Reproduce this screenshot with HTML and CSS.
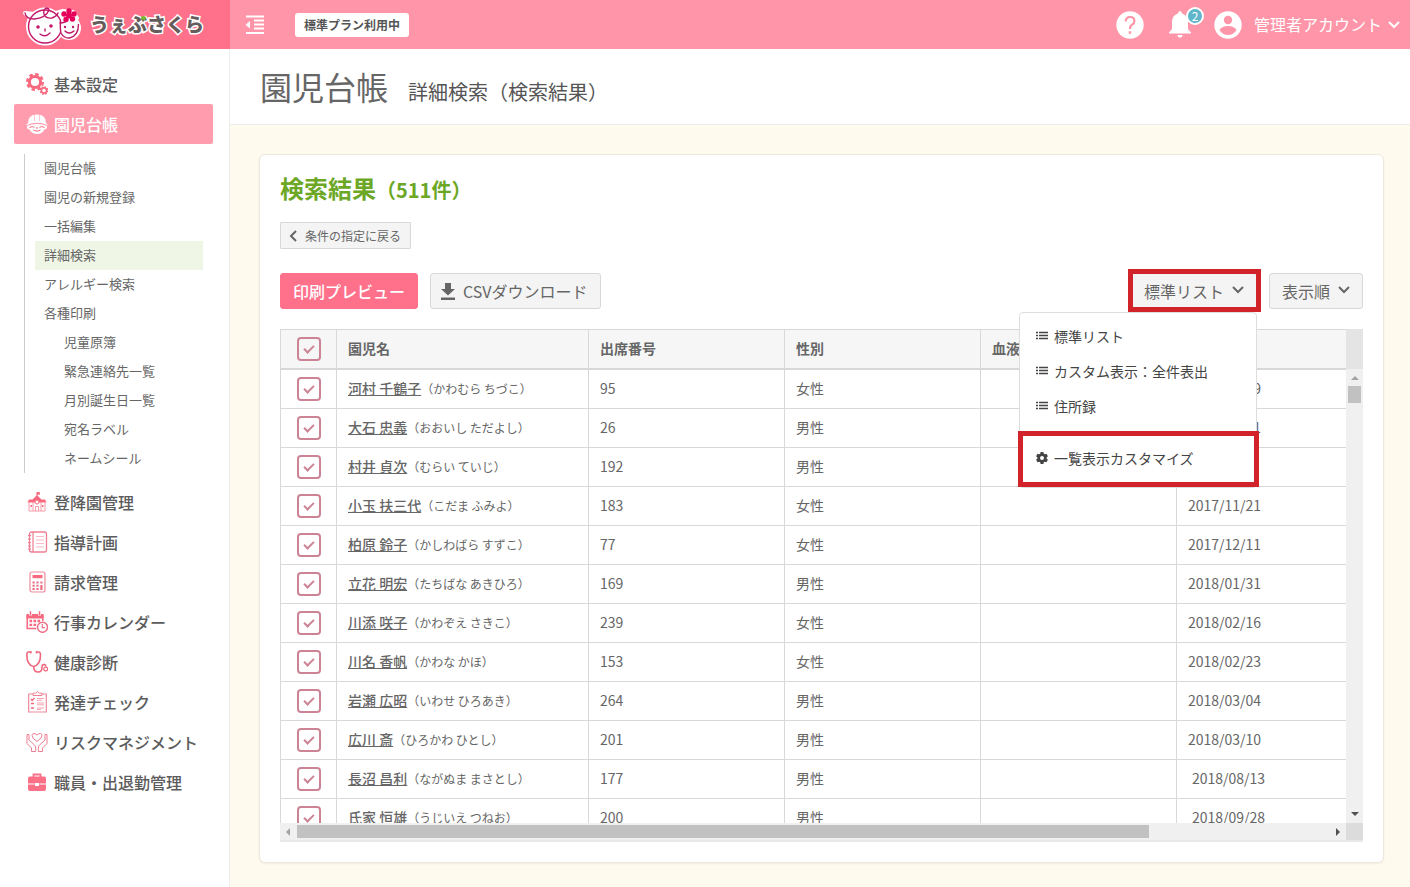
FILE: index.html
```html
<!DOCTYPE html>
<html lang="ja">
<head>
<meta charset="utf-8">
<meta name="viewport" content="width=device-width, initial-scale=1">
<title>園児台帳 詳細検索（検索結果）</title>
<link rel="stylesheet" href="styles.css">
</head>
<body>
<svg class="defs" aria-hidden="true">
  <symbol id="chev-down" viewBox="0 0 12 8"><path d="M1 1l5 5 5-5" fill="none" stroke="currentColor" stroke-width="2"/></symbol>
  <symbol id="list" viewBox="0 0 12 9"><path d="M0 1.500h2M0 4.500h2M0 7.500h2M3 1.500h9M3 4.500h9M3 7.500h9" stroke="currentColor" stroke-width="1.300"/></symbol>
</svg>
<div class="app">
  <header class="topbar">
    <a class="brand" href="#">
      <svg class="brand-mark" viewBox="0 0 60 44" aria-hidden="true">
        <g fill="#fff" stroke="#fff" stroke-width="4" stroke-linejoin="round">
          <circle cx="22" cy="23.500" r="17"/><circle cx="46" cy="25" r="10"/><path d="M2 10q8 8 20 3L40 8 50 9 54 15z"/>
        </g>
        <circle cx="22" cy="23.500" r="16.500" fill="#fff" stroke="#c2186a" stroke-width="1.400"/>
        <path d="M37.500 18q-.5 8 .5 12 3 5.500 8.500 5 9-2 9-14" fill="#fff" stroke="#c2186a" stroke-width="1.400"/>
        <path d="M2 10q1 6 9 6 12-1 15-9 0-2-3-2-3 2-2 6 2 5 8 4 5-2 6-5M37 20q5 0 7-3" fill="none" stroke="#c2186a" stroke-width="1.400" stroke-linecap="round"/>
        <path d="M17 31q5 4 10-1M42 28q4 4 9 0M22 26v2" fill="none" stroke="#c2186a" stroke-width="1.400" stroke-linecap="round"/>
        <g fill="#c2186a"><circle cx="15" cy="24" r="1.800"/><circle cx="28" cy="23" r="1.800"/><circle cx="42" cy="24" r="1.200"/><circle cx="50" cy="24" r="1.200"/></g>
        <g fill="#e4005a"><circle cx="46" cy="8" r="2.700"/><circle cx="51" cy="11" r="2.700"/><circle cx="49.500" cy="16" r="2.700"/><circle cx="43" cy="16.500" r="2.700"/><circle cx="41" cy="11" r="2.700"/><circle cx="46" cy="12.500" r="3"/></g>
      </svg>
      <span class="brand-name">うぇ<span class="leaf">ぶ</span>さくら</span>
    </a>
    <div class="bar">
      <button class="icon-btn" type="button" aria-label="メニュー開閉">
        <svg width="20" height="20" viewBox="0 0 20 20"><path d="M1 1.500h18M9 5.500h10M9 9.500h10M9 13.500h10M1 18h18" stroke="#fff" stroke-width="1.800"/><path d="M5 6v7.500L.5 9.700z" fill="#fff"/></svg>
      </button>
      <span class="plan">標準プラン利用中</span>
      <div class="tools">
        <button class="icon-btn" type="button" aria-label="ヘルプ">
          <svg width="28" height="28" viewBox="0 0 28 28"><circle cx="14" cy="14" r="13.700" fill="#fff"/><path d="M9.800 10.500q0-4.500 4.300-4.500t4.300 4q0 2.200-2.300 3.700t-2.100 4.300" fill="none" stroke="#ff95a8" stroke-width="2.200"/><path d="M12.700 20.300h2.500v2.500h-2.500z" fill="#ff95a8"/></svg>
        </button>
        <button class="icon-btn bell" type="button" aria-label="お知らせ">
          <svg width="22" height="27" viewBox="0 0 22 27"><path d="M11 0q2 0 2 2.500 6 1.800 6 8.500v7l3 3.500v1H0v-1L3 18v-7q0-6.700 6-8.500Q9 0 11 0zM8.300 24h5.400q-.4 2.700-2.700 2.700T8.300 24z" fill="#fff"/></svg>
          <span class="badge">2</span>
        </button>
        <button class="account" type="button">
          <svg width="28" height="28" viewBox="0 0 28 28"><circle cx="14" cy="14" r="13.700" fill="#fff"/><circle cx="14" cy="9" r="4.200" fill="#ff95a8"/><path d="M5.500 19q2.500-4 8.500-4t8.500 4q-3 5-8.500 5t-8.500-5z" fill="#ff95a8"/></svg>
          <span>管理者アカウント</span>
          <svg class="chev" width="12" height="8"><use href="#chev-down"/></svg>
        </button>
      </div>
    </div>
  </header>

  <nav class="sidebar">
    <ul class="menu">
      <li><a class="item" href="#"><svg viewBox="0 0 22 22"><circle cx="9" cy="9" r="5.600" fill="none" stroke="#f8697f" stroke-width="3"/><circle cx="9" cy="9" r="7.800" fill="none" stroke="#f8697f" stroke-width="2.400" stroke-dasharray="3.500 2.620"/><circle cx="18" cy="17.500" r="2.600" fill="none" stroke="#f8697f" stroke-width="1.600"/><circle cx="18" cy="17.500" r="3.800" fill="none" stroke="#f8697f" stroke-width="1.200" stroke-dasharray="1.700 1.280"/></svg>基本設定</a></li>
      <li><a class="item active" href="#"><svg viewBox="0 0 22 22"><path d="M2 10q0-8.500 9-8.500T20 10q2 1 1.500 2.500-4-2.800-10.500-2.800T.5 12.500Q0 11 2 10z" fill="#fff"/><path d="M8.500 2v6M13.500 2v6" stroke="#ff9cad" stroke-width=".6"/><path d="M1 13q-.5 3 2.500 3.500Q6 21 11 21t7.500-4.500Q21.500 16 21 13q-4-2-10-2T1 13z" fill="#fff"/><path d="M3.500 14.500q3-2 5 0M13.500 14.500q2-2 5 0M7.500 17q3.500 2.500 7 0M10 15h2" fill="none" stroke="#f8697f"/></svg>園児台帳</a>
        <ul class="submenu">
          <li><a href="#">園児台帳</a></li>
          <li><a href="#">園児の新規登録</a></li>
          <li><a href="#">一括編集</a></li>
          <li><a class="current" href="#">詳細検索</a></li>
          <li><a href="#">アレルギー検索</a></li>
          <li><a href="#">各種印刷</a>
            <ul class="nested">
              <li><a href="#">児童原簿</a></li>
              <li><a href="#">緊急連絡先一覧</a></li>
              <li><a href="#">月別誕生日一覧</a></li>
              <li><a href="#">宛名ラベル</a></li>
              <li><a href="#">ネームシール</a></li>
            </ul>
          </li>
        </ul>
      </li>
      <li><a class="item" href="#"><svg viewBox="0 0 22 22"><path d="M11 1v5M11 1.500h2.500v1.800H11z" stroke="#f8697f" fill="#f8697f" stroke-width=".8"/><path d="M11 4l4.500 4.500H19l1.500 3H1.500L3 8.500h3.500z" fill="#f8697f"/><path d="M3 11.500V20h16v-8.500M7 11v9M15 11v9M9.500 20v-4.500h3V20" fill="none" stroke="#f99aa8"/><circle cx="11" cy="11" r="2" fill="#fff" stroke="#f8697f"/><path d="M4.500 14h1.500v2H4.500zM16 14h1.500v2H16z" fill="#f8697f"/></svg>登降園管理</a></li>
      <li><a class="item" href="#"><svg viewBox="0 0 22 22"><rect x="3.500" y="1" width="17" height="20" rx="2" fill="none" stroke="#ee7f92" stroke-width="1.300"/><path d="M7 1v20M2 4.500h3M2 8h3M2 11.500h3M2 15h3M2 18h3" stroke="#ee7f92" stroke-width="1.200"/><path d="M10 5.500h8M10 9h8M10 12.500h8M10 16h8" stroke="#f9a9b5" stroke-width=".8"/></svg>指導計画</a></li>
      <li><a class="item" href="#"><svg viewBox="0 0 22 22"><rect x="4" y="1" width="15" height="20" rx="2" fill="none" stroke="#ee8a9b" stroke-width="1.200"/><path d="M6.500 4h10v3.200h-10z" fill="#f8697f"/><path d="M6.500 11.500h10M6.500 14.800h7M6.500 18h7" stroke="#ee6f85" stroke-width="2" stroke-dasharray="2.200 1.700"/><path d="M15.400 14v5" stroke="#ee6f85" stroke-width="2.200"/></svg>請求管理</a></li>
      <li><a class="item" href="#"><svg viewBox="0 0 22 22"><path d="M.5 3h17v4.500H.5z" fill="#f8697f"/><path d="M4.500.5v4M13.500.5v4" stroke="#fff" stroke-width="3"/><path d="M4.500.2v4M13.500.2v4M1.200 4v13.500h9M16.800 4v6" fill="none" stroke="#f8697f" stroke-width="1.500"/><path d="M3.500 10h11M3.500 13.800h7" stroke="#f8697f" stroke-width="2.300" stroke-dasharray="2.600 1.400"/><circle cx="16.500" cy="16.300" r="5" fill="#fff" stroke="#ee7086" stroke-width="1.500"/><path d="M16.300 13v3.600H19" fill="none" stroke="#ee7086" stroke-width="1.200"/></svg>行事カレンダー</a></li>
      <li><a class="item" href="#"><svg viewBox="0 0 22 22"><path d="M5 1H2.500Q.8 1 .8 4q0 10 6.700 11.500Q14.500 14 14.500 4q0-3-1.800-3h-2.200M7.700 15.500q0 5.500 4.300 5.500t4-5q.2-3 2.500-2.500 1.500.5 1.200 2" fill="none" stroke="#f0677d" stroke-width="1.600"/><path d="M4.800 0v2.500M10.600 0v2.500" stroke="#f0677d" stroke-width="1.600"/><circle cx="19.700" cy="18" r="1.900" fill="none" stroke="#f0677d" stroke-width="1.200"/></svg>健康診断</a></li>
      <li><a class="item" href="#"><svg viewBox="0 0 22 22"><path d="M7 3H2.700v18h17.600V3H16" fill="none" stroke="#ee8a9b" stroke-width="1.200"/><path d="M7 4.500V2.200h2.500Q11.500-.8 13.500 2.200H16v2.300z" fill="none" stroke="#ee7f92"/><path d="M5 8l1.200 1.500L8.500 7M5 12.500h3M5 17h3" fill="none" stroke="#f0677d" stroke-width="1.400"/><path d="M11 7.500h7M11 9.300h5M11 12h7M11 13.800h7M11 17h7M11 18.500h4" stroke="#f48b9c" stroke-width=".8"/></svg>発達チェック</a></li>
      <li><a class="item" href="#"><svg viewBox="0 0 22 22"><path d="M11 10.500Q5.500 7 6 4.200 7 .8 11 4q4-3.200 5 .2.500 2.800-5 6.300zM1 3.500h2V9l5 4.500q1.700 1.500 1.700 3.500v3.500H5.500V17L1 12.500zM21 3.500h-2V9l-5 4.500q-1.700 1.500-1.700 3.500v3.500h4.200V17l4.500-4.500z" fill="none" stroke="#ec7f91"/></svg>リスクマネジメント</a></li>
      <li><a class="item" href="#"><svg viewBox="0 0 22 22"><path d="M7.500 6V3.500h7V6" fill="none" stroke="#fb6f87" stroke-width="1.800"/><rect x="2" y="5.500" width="18" height="14.500" rx="2" fill="#fb6f87"/><path d="M2 13h6.500M13.500 13H20" stroke="#fff" stroke-width="1.200"/><path d="M9 12h4v3H9z" fill="#fff"/></svg>職員・出退勤管理</a></li>
    </ul>
  </nav>

  <main class="main">
    <div class="page-head">
      <h1>園児台帳</h1>
      <p>詳細検索（検索結果）</p>
    </div>
    <div class="content">
      <section class="card">
        <h2>検索結果<span>（511件）</span></h2>
        <button class="btn back" type="button"><svg width="8" height="12" viewBox="0 0 8 12"><path d="M7 1L2 6l5 5" fill="none" stroke="currentColor" stroke-width="2"/></svg>条件の指定に戻る</button>
        <div class="actions">
          <button class="btn primary" type="button">印刷プレビュー</button>
          <button class="btn" type="button"><svg width="14" height="17" viewBox="0 0 14 17"><path d="M4 0h6v6h4l-7 6.500L0 6h4zM0 14.500h14V17H0z" fill="currentColor"/></svg>CSVダウンロード</button>
          <div class="picker">
            <button class="btn marked" type="button" aria-haspopup="true" aria-expanded="true">標準リスト<svg class="chev" width="12" height="8"><use href="#chev-down"/></svg></button>
            <div class="dropdown">
              <a href="#"><svg width="12" height="9"><use href="#list"/></svg>標準リスト</a>
              <a href="#"><svg width="12" height="9"><use href="#list"/></svg>カスタム表示：全件表出</a>
              <a href="#"><svg width="12" height="9"><use href="#list"/></svg>住所録</a>
              <a class="customize" href="#"><svg width="12" height="12" viewBox="0 0 12 12"><path fill="currentColor" fill-rule="evenodd" d="M4.600 0h2.800l.4 1.700 1 .6 1.700-.5 1.400 2.400L10.600 5.400v1.200l1.300 1.200-1.400 2.400-1.700-.5-1 .6L7.400 12H4.600l-.4-1.700-1-.6-1.700.5L.1 7.800l1.300-1.200V5.400L.1 4.200l1.400-2.400 1.700.5 1-.6zM6 4a2 2 0 100 4 2 2 0 000-4z"/></svg>一覧表示カスタマイズ</a>
            </div>
          </div>
          <button class="btn" type="button">表示順<svg class="chev" width="12" height="8"><use href="#chev-down"/></svg></button>
        </div>

        <div class="grid">
          <div class="viewport">
            <table>
              <colgroup><col class="c-check"><col class="c-name"><col class="c-std"><col class="c-std"><col class="c-std"><col class="c-std"></colgroup>
              <thead>
                <tr><th><input type="checkbox" checked aria-label="すべて選択"></th><th>園児名</th><th>出席番号</th><th>性別</th><th>血液型</th><th>生年月日</th></tr>
              </thead>
              <tbody>
                <tr><td><input type="checkbox" checked aria-label="河村 千鶴子"></td><td><a href="#">河村 千鶴子</a><small>（かわむら ちづこ）</small></td><td>95</td><td>女性</td><td></td><td>2017/04/19</td></tr>
                <tr><td><input type="checkbox" checked aria-label="大石 忠義"></td><td><a href="#">大石 忠義</a><small>（おおいし ただよし）</small></td><td>26</td><td>男性</td><td></td><td>2017/06/21</td></tr>
                <tr><td><input type="checkbox" checked aria-label="村井 貞次"></td><td><a href="#">村井 貞次</a><small>（むらい ていじ）</small></td><td>192</td><td>男性</td><td></td><td></td></tr>
                <tr><td><input type="checkbox" checked aria-label="小玉 扶三代"></td><td><a href="#">小玉 扶三代</a><small>（こだま ふみよ）</small></td><td>183</td><td>女性</td><td></td><td>2017/11/21</td></tr>
                <tr><td><input type="checkbox" checked aria-label="柏原 鈴子"></td><td><a href="#">柏原 鈴子</a><small>（かしわばら すずこ）</small></td><td>77</td><td>女性</td><td></td><td>2017/12/11</td></tr>
                <tr><td><input type="checkbox" checked aria-label="立花 明宏"></td><td><a href="#">立花 明宏</a><small>（たちばな あきひろ）</small></td><td>169</td><td>男性</td><td></td><td>2018/01/31</td></tr>
                <tr><td><input type="checkbox" checked aria-label="川添 咲子"></td><td><a href="#">川添 咲子</a><small>（かわぞえ さきこ）</small></td><td>239</td><td>女性</td><td></td><td>2018/02/16</td></tr>
                <tr><td><input type="checkbox" checked aria-label="川名 香帆"></td><td><a href="#">川名 香帆</a><small>（かわな かほ）</small></td><td>153</td><td>女性</td><td></td><td>2018/02/23</td></tr>
                <tr><td><input type="checkbox" checked aria-label="岩瀬 広昭"></td><td><a href="#">岩瀬 広昭</a><small>（いわせ ひろあき）</small></td><td>264</td><td>男性</td><td></td><td>2018/03/04</td></tr>
                <tr><td><input type="checkbox" checked aria-label="広川 斎"></td><td><a href="#">広川 斎</a><small>（ひろかわ ひとし）</small></td><td>201</td><td>男性</td><td></td><td>2018/03/10</td></tr>
                <tr class="late"><td><input type="checkbox" checked aria-label="長沼 昌利"></td><td><a href="#">長沼 昌利</a><small>（ながぬま まさとし）</small></td><td>177</td><td>男性</td><td></td><td>2018/08/13</td></tr>
                <tr class="late"><td><input type="checkbox" checked aria-label="氏家 恒雄"></td><td><a href="#">氏家 恒雄</a><small>（うじいえ つねお）</small></td><td>200</td><td>男性</td><td></td><td>2018/09/28</td></tr>
              </tbody>
            </table>
          </div>
          <div class="vbar">
            <div class="vbar-head"></div>
            <svg class="arrow" viewBox="0 0 17 17"><path d="M5 11h8L9 7z" fill="#a3a3a3"/></svg>
            <div class="vthumb"></div>
            <svg class="arrow end" viewBox="0 0 17 17"><path d="M5 6h8l-4 4z" fill="#505050"/></svg>
          </div>
          <div class="hbar">
            <svg class="arrow" viewBox="0 0 17 17"><path d="M10 5v8L6 9z" fill="#a3a3a3"/></svg>
            <div class="htrack"><div class="hthumb"></div></div>
            <svg class="arrow" viewBox="0 0 17 17"><path d="M7 5v8l4-4z" fill="#505050"/></svg>
          </div>
          <div class="corner"></div>
        </div>
      </section>
    </div>
  </main>
</div>
</body>
</html>
```

FILE: styles.css
```css
*, ::before, ::after { box-sizing: border-box; }
body {
  margin: 0;
  color: #666;
  background: #fff;
  font: 14px/20px "Noto Sans CJK JP", sans-serif;
}
a { color: inherit; text-decoration: none; }
ul { margin: 0; padding: 0; list-style: none; }
h1, h2, p { margin: 0; }
button { font: inherit; color: inherit; cursor: pointer; }
svg { flex: none; }
.defs { position: absolute; width: 0; height: 0; }

.app {
  display: grid;
  grid-template: 49px minmax(0, 1fr) / 230px minmax(0, 1fr);
  height: 100vh;
}

/* top bar */
.topbar { grid-column: 1 / -1; display: grid; grid-template-columns: 230px 1fr; }
.brand { display: flex; align-items: center; gap: 7px; padding-left: 23px; background: #ff708b; }
.brand-mark { width: 60px; height: 44px; }
.brand-name {
  padding-bottom: 2px;
  color: #665c5c;
  font-size: 19px;
  line-height: 28px;
  font-weight: 900;
  -webkit-text-stroke: 3px #fff;
  paint-order: stroke fill;
}
.leaf { position: relative; }
.leaf::after {
  content: "";
  position: absolute;
  top: 6px;
  right: 1px;
  width: 5px;
  height: 4px;
  border-radius: 50%;
  background: #7ab52c;
}
.bar { display: flex; align-items: center; padding: 0 10px 0 15px; background: #ff95a8; color: #fff; }
.icon-btn { display: flex; padding: 0; border: 0; background: none; }
.plan {
  margin-left: 30px;
  padding: 2px 9px;
  border-radius: 3px;
  background: #fff;
  color: #555;
  font-size: 12px;
  font-weight: 700;
}
.tools { display: flex; align-items: center; margin-left: auto; }
.bell { position: relative; margin: 0 23px 0 25px; }
.badge {
  position: absolute;
  top: -4px;
  left: 17px;
  width: 18px;
  height: 18px;
  border: 2px solid #fff;
  border-radius: 50%;
  background: #5fb6cb;
  color: #fff;
  font-size: 12px;
  line-height: 14px;
  text-align: center;
}
.account { display: flex; align-items: center; padding: 0; border: 0; background: none; font-size: 16px; white-space: nowrap; }
.account span { margin: 0 6px 0 12px; padding-bottom: 2px; }

/* sidebar */
.sidebar { padding: 15px 16px 0 14px; border-right: 1px solid #eee; overflow: hidden; }
.item {
  display: flex;
  align-items: center;
  gap: 6px;
  height: 40px;
  padding-left: 12px;
  border-radius: 2px;
  font-size: 16px;
  font-weight: 500;
  color: #5c5c5c;
  white-space: nowrap;
}
.item svg { width: 22px; height: 22px; }
.item.active { background: #ff9cad; color: #fff; }
.submenu { margin: 10px 10px 9px; padding-left: 10px; border-left: 1px solid #ccc; font-size: 13px; }
.submenu a { display: block; padding: 0 0 2px 9px; line-height: 27px; }
.submenu .current { background: #f0f6e6; }
.nested { padding-left: 20px; }

/* page */
.main { display: flex; flex-direction: column; min-height: 0; background: #fffaee; }
.page-head {
  display: flex;
  align-items: center;
  gap: 20px;
  height: 76px;
  padding: 0 30px 2px;
  border-bottom: 1px solid #eee;
  background: #fff;
}
h1 { font-size: 32px; line-height: 48px; font-weight: 400; }
.page-head p { padding-top: 12px; font-size: 20px; line-height: 30px; color: #555; }
.content { display: flex; flex: 1; min-height: 0; padding: 29px 26px 24px 29px; }
.card {
  display: flex;
  flex: 1;
  flex-direction: column;
  align-items: flex-start;
  min-width: 0;
  padding: 17px 20px 20px;
  border: 1px solid #eee8dc;
  border-radius: 6px;
  background: #fff;
  box-shadow: 0 1px 2px rgba(0, 0, 0, .06);
}
h2 { color: #6ca726; font-size: 24px; line-height: 32px; font-weight: 700; }
h2 span { font-size: 20px; }

.btn {
  display: flex;
  align-items: center;
  gap: 8px;
  height: 36px;
  padding: 0 12px;
  border: 1px solid #d8d8d8;
  border-radius: 3px;
  background: #f4f4f4;
  font-size: 16px;
  white-space: nowrap;
}
.btn svg { margin-left: -2px; }
.btn .chev { margin: 0 0 3px; }
.back { height: 27px; margin: 16px 0 24px; padding: 0 9px 0 10px; border-radius: 1px; font-size: 12px; }
.primary { border-color: #ff708b; background: #ff708b; color: #fff; font-weight: 500; }
.actions { display: flex; gap: 12px; align-self: stretch; margin-bottom: 20px; }

.picker { position: relative; z-index: 2; margin-left: auto; }
.marked { position: relative; }
.marked::after, .customize::after {
  content: "";
  position: absolute;
  inset: -5px -5px -4px -4px;
  border: 5px solid #d2232a;
}
.dropdown {
  position: absolute;
  top: calc(100% + 3px);
  right: 0;
  width: 238px;
  padding-top: 6px;
  border: 1px solid #ddd;
  border-radius: 4px;
  background: #fff;
  color: #444;
}
.dropdown a { display: flex; align-items: center; gap: 6px; height: 35px; padding: 0 0 2px 16px; }
.dropdown .customize { position: relative; height: 56px; margin-top: 7px; }
.dropdown .customize::after { inset: 0 -3px 0 -2px; }

/* result grid */
.grid {
  display: grid;
  grid-template: minmax(0, 1fr) 17px / minmax(0, 1fr) 17px;
  flex: 1;
  align-self: stretch;
  min-height: 0;
  border-bottom: 2px solid #e8e8e8;
}
.viewport { overflow: hidden; border: solid #d8d8d8; border-width: 1px 0 0 1px; }
table { width: 1092px; table-layout: fixed; border-spacing: 0; }
.c-check { width: 56px; }
.c-name { width: 252px; }
.c-std { width: 196px; }
th, td { padding: 0 11px 2px; border: solid #d8d8d8; border-width: 0 1px 1px 0; text-align: left; white-space: nowrap; }
th { height: 40px; padding-bottom: 3px; border-bottom-width: 2px; background: #f6f6f6; font-weight: 700; }
td { height: 39px; }
th:first-child, td:first-child { padding: 0; text-align: center; }
td a { text-decoration: underline; font-weight: 500; }
td small { font-size: 12px; }
.late td:last-child { padding-left: 15px; }
input[type="checkbox"] {
  appearance: none;
  display: block;
  width: 24px;
  height: 24px;
  margin: 0 auto;
  padding: 6px 0 0 5px;
  border: 2px solid #cc8495;
  border-radius: 4px;
  background: transparent;
}
input[type="checkbox"]:checked::before {
  content: "";
  display: block;
  width: 10px;
  height: 6px;
  border: solid #cc8495;
  border-width: 0 0 2px 2px;
  transform: rotate(-45deg);
}

.vbar { display: flex; flex-direction: column; align-items: center; background: #f0f0f0; }
.vbar-head { align-self: stretch; height: 40px; background: #e4e4e4; }
.vthumb { width: 13px; height: 17px; background: #c1c1c1; }
.arrow { width: 17px; height: 17px; }
.arrow.end { margin-top: auto; }
.hbar { display: flex; background: #f0f0f0; }
.htrack { flex: 1; padding: 2px 0; }
.hthumb { width: 82.6%; height: 13px; background: #c1c1c1; }
.corner { background: #dcdcdc; }
```
